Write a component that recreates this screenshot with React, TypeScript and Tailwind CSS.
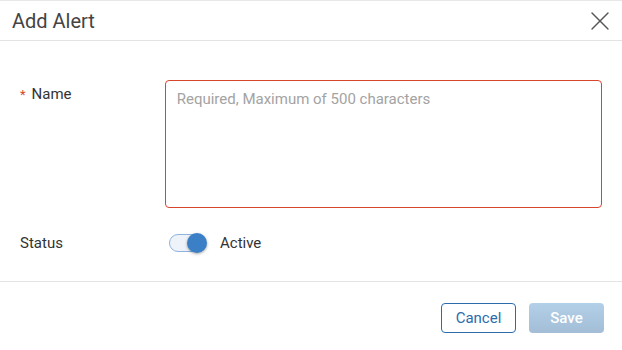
import { X } from 'lucide-react';

function App() {
    return (
        <div className="flex h-[350px] w-[622px] flex-col bg-white font-['Roboto',sans-serif] text-[#333]">
            {/* Header */}
            <div className="flex h-[41px] items-center justify-between border-b border-[#e3e3e3] border-t border-t-[#e8e8e8] pl-3 pr-[6px]">
                <h1 className="text-[20px] font-normal text-[#444]">Add Alert</h1>
                <X className="h-[32px] w-[32px] text-[#555]" strokeWidth={1} />
            </div>

            {/* Body */}
            <div className="flex flex-1 flex-col px-5 pt-[39px]">
                <div className="flex">
                    <label className="flex w-[145px] items-start pt-[3px] text-[15px] text-[#333]">
                        <span className="mr-[6px] mt-[2px] text-[13px] text-[#d24a2b]">*</span>
                        Name
                    </label>
                    <textarea
                        placeholder="Required, Maximum of 500 characters"
                        className="h-[128px] w-[438px] resize-none rounded-[4px] border border-[#d9452a] px-[11px] py-[7px] text-[15px] text-[#333] outline-none placeholder:text-[#a3a3a3]"
                    />
                </div>

                <div className="mt-[24px] flex items-center">
                    <span className="w-[149px] text-[15px] text-[#333]">Status</span>
                    <div className="relative h-[20px] w-[38px]">
                        <div className="absolute left-0 top-[1px] h-[18px] w-[36px] rounded-full border border-[#8db4df] bg-[#eef3f9]" />
                        <div className="absolute right-0 top-0 h-[20px] w-[20px] rounded-full bg-[#3b80c6] shadow-[0_1px_3px_rgba(0,0,0,0.35)]" />
                    </div>
                    <span className="ml-[13px] text-[15px] text-[#333]">Active</span>
                </div>
            </div>

            {/* Footer */}
            <div className="flex h-[69px] items-start justify-end gap-[13px] border-t border-[#e3e3e3] pr-[18px] pt-[21px]">
                <button className="h-[30px] w-[75px] rounded-[4px] border border-[#2c6cac] bg-white text-[15px] text-[#2c6cac]">
                    Cancel
                </button>
                <button className="h-[30px] w-[75px] rounded-[4px] bg-gradient-to-b from-[#b3d0e9] to-[#a3bdd6] text-[15px] font-medium text-white">
                    Save
                </button>
            </div>
        </div>
    );
}

export default App;
